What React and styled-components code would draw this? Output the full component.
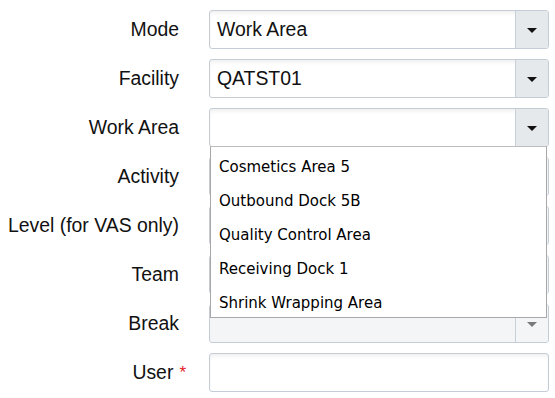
import React from 'react';
import styled, { createGlobalStyle } from 'styled-components';

const GlobalStyle = createGlobalStyle`
  html, body {
    margin: 0;
    padding: 0;
    background: #ffffff;
  }
  body {
    font-family: "Liberation Sans", Arial, sans-serif;
  }
`;

const Form = styled.div`
  display: grid;
  grid-template-columns: 179px 340px;
  column-gap: 30px;
  row-gap: 10px;
  grid-auto-rows: 39px;
  padding-top: 10px;
  width: 549px;
`;

const Label = styled.div`
  display: flex;
  align-items: center;
  justify-content: flex-end;
  font-size: 19.4px;
  color: #111;
  white-space: nowrap;
`;

const Required = styled.span`
  color: #e4202c;
  margin-left: 6px;
  margin-right: -7px;
  font-size: 17px;
`;

const Field = styled.div`
  position: relative;
  display: flex;
  box-sizing: border-box;
  height: 39px;
  border: 1px solid #c4cdd5;
  border-radius: 3px;
  background: ${p => p.disabled ? '#f4f5f7' : '#ffffff'};
  box-shadow: ${p => p.disabled ? 'none' : 'inset 0 3px 4px -1px rgba(0, 0, 0, 0.07)'};
`;

const Value = styled.div`
  flex: 1;
  display: flex;
  align-items: center;
  padding-left: 7px;
  font-size: 19.4px;
  color: #111;
`;

const ArrowButton = styled.div`
  width: 32px;
  display: flex;
  align-items: center;
  justify-content: center;
  border-left: 1px solid #c8d0d7;
  background: ${p => p.disabled ? '#f4f5f7' : '#e6e9ec'};
  border-radius: 0 2px 2px 0;
`;

const Caret = styled.span`
  width: 0;
  height: 0;
  border-left: 5px solid transparent;
  border-right: 5px solid transparent;
  border-top: 5px solid ${p => p.disabled ? '#7a7a7a' : '#111'};
  margin-top: 1px;
`;

const Menu = styled.ul`
  position: absolute;
  top: 100%;
  left: 0;
  right: 1px;
  margin: 0;
  padding: 0;
  list-style: none;
  background: #ffffff;
  border: 1px solid #a8a8a8;
  border-top-color: #bdbdbd;
  box-sizing: border-box;
  z-index: 10;
`;

const MenuItem = styled.li`
  height: 34px;
  box-sizing: border-box;
  display: flex;
  align-items: center;
  padding: 6px 0 0 8px;
  font-family: "DejaVu Sans", Verdana, sans-serif;
  font-size: 15px;
  color: #000;
`;

const Select = ({ value, disabled, children }) => (
  <Field disabled={disabled}>
    <Value>{value}</Value>
    <ArrowButton disabled={disabled}>
      <Caret disabled={disabled} />
    </ArrowButton>
    {children}
  </Field>
);

const workAreas = [
  'Cosmetics Area 5',
  'Outbound Dock 5B',
  'Quality Control Area',
  'Receiving Dock 1',
  'Shrink Wrapping Area',
];

const App = () => (
  <>
    <GlobalStyle />
    <Form>
      <Label>Mode</Label>
      <Select value="Work Area" />

      <Label>Facility</Label>
      <Select value="QATST01" />

      <Label>Work Area</Label>
      <Select>
        <Menu>
          {workAreas.map(a => <MenuItem key={a}>{a}</MenuItem>)}
        </Menu>
      </Select>

      <Label>Activity</Label>
      <Select disabled />

      <Label>Level (for VAS only)</Label>
      <Select disabled />

      <Label>Team</Label>
      <Select disabled />

      <Label>Break</Label>
      <Select disabled />

      <Label>User<Required>*</Required></Label>
      <Field />
    </Form>
  </>
);

export default App;
